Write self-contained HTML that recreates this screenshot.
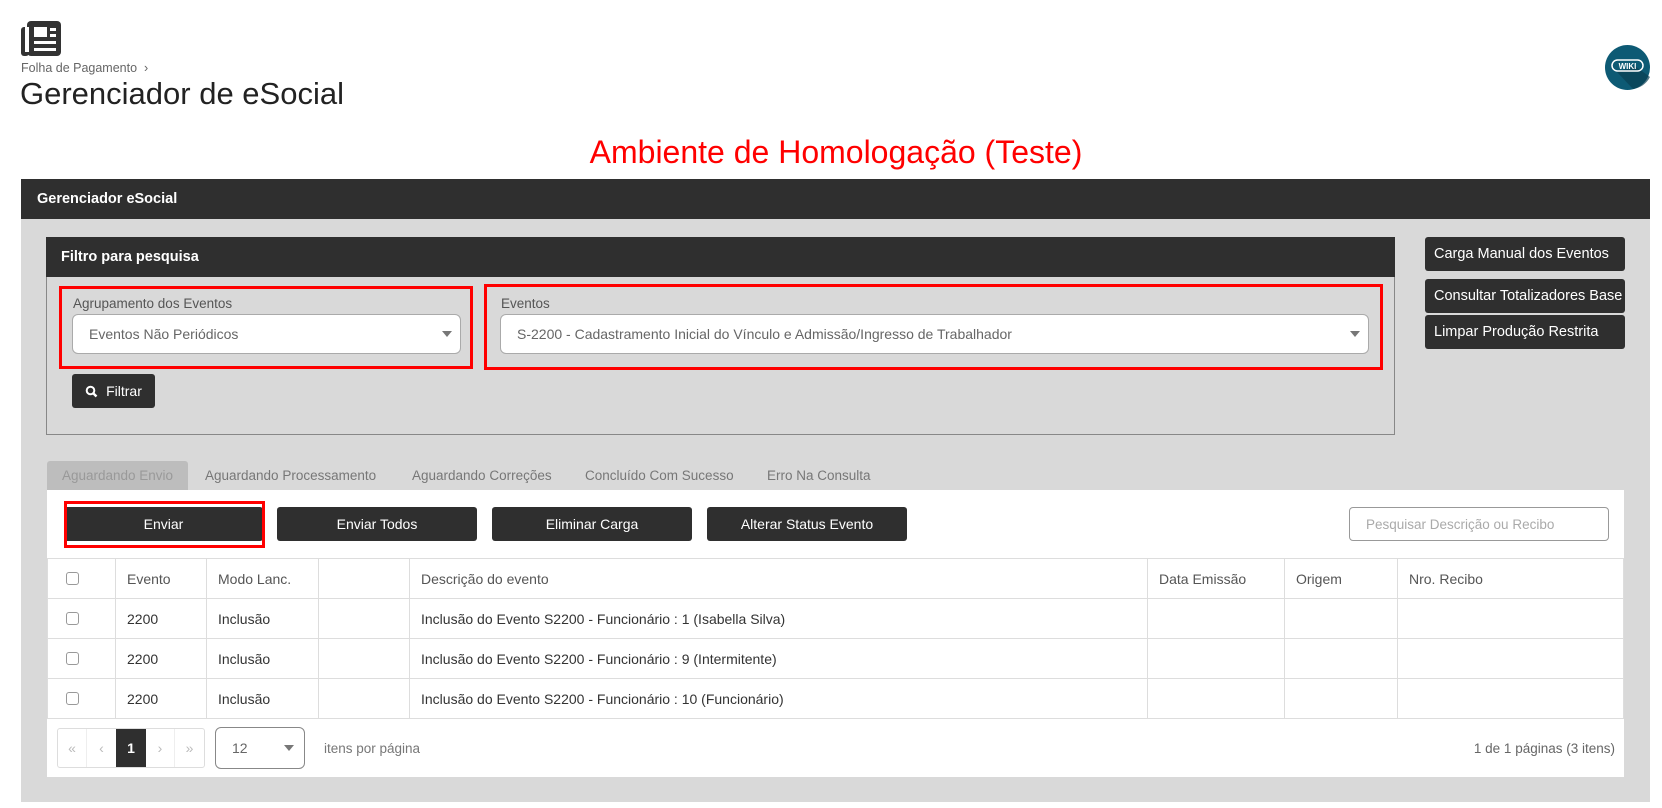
<!DOCTYPE html>
<html><head><meta charset="utf-8"><style>
*{box-sizing:border-box;margin:0;padding:0}
body{width:1662px;height:808px;background:#fff;font-family:"Liberation Sans",sans-serif;position:relative;overflow:hidden;color:#333}
.a{position:absolute}
.btn{position:absolute;background:#2f2f2f;color:#fff;border-radius:3px;font-size:14px;display:flex;align-items:center;justify-content:center}
.rb{position:absolute;background:#2f2f2f;color:#fff;border-radius:3px;font-size:14.5px;padding-left:9px;display:flex;align-items:center;white-space:nowrap;overflow:hidden}
.sel{position:absolute;background:#fff;border:1px solid #aaa;border-radius:6px;font-size:14px;color:#666;padding-left:16px;display:flex;align-items:center}
.tri{position:absolute;right:8px;top:50%;margin-top:-3px;width:0;height:0;border-left:5px solid transparent;border-right:5px solid transparent;border-top:6px solid #777}
.red{position:absolute;border:3px solid #f00}
.lbl{position:absolute;font-size:13.5px;color:#555}
.tab{position:absolute;top:461px;height:29px;font-size:13.5px;color:#777;display:flex;align-items:center}
table{position:absolute;left:47px;top:558px;width:1577px;border-collapse:collapse;font-size:14px}
td{border:1px solid #ddd;height:40px;padding-left:11px;color:#333}
tr.h td{height:40px;color:#555}
.cb{width:13px;height:13px;border:1px solid #999;border-radius:3px;margin-left:7px}
</style></head><body>
<svg class="a" style="left:21px;top:21px" width="40" height="35" viewBox="0 0 40 35"><rect x="0" y="6" width="8" height="29" rx="3" fill="#333"/><rect x="6" y="0" width="34" height="35" rx="4" fill="#333"/><rect x="4" y="6" width="4" height="25" fill="#fff"/><rect x="13" y="6" width="13" height="10" fill="#fff"/><rect x="29" y="7" width="6" height="3" fill="#fff"/><rect x="29" y="13" width="6" height="3" fill="#fff"/><rect x="13" y="20" width="22" height="3" fill="#fff"/><rect x="13" y="27" width="22" height="3" fill="#fff"/></svg>
<div class="a" style="left:21px;top:61px;font-size:12.5px;color:#666">Folha de Pagamento &nbsp;›</div>
<div class="a" style="left:20px;top:76px;font-size:31px;color:#222">Gerenciador de eSocial</div>
<svg class="a" style="left:1605px;top:45px" width="45" height="45" viewBox="0 0 45 45"><circle cx="22.5" cy="22.5" r="22.5" fill="#0d5a74"/><path d="M30 21 L45 32 A22.5 22.5 0 0 1 28 44 L12 27 Z" fill="#0a3f52" opacity=".7"/><rect x="7" y="15" width="31" height="11" rx="5.5" fill="none" stroke="#fff" stroke-width="1.5"/><text x="22.5" y="24" font-size="8" font-weight="bold" fill="#fff" text-anchor="middle" font-family="Liberation Sans">WIKI</text></svg>
<div class="a" style="left:0;width:1672px;text-align:center;top:134px;font-size:32px;color:#f00">Ambiente de Homologação (Teste)</div>
<div class="a" style="left:21px;top:179px;width:1629px;height:40px;background:#2f2f2f;color:#fff;font-weight:bold;font-size:14.5px;padding:12px 0 0 16px">Gerenciador eSocial</div>
<div class="a" style="left:21px;top:219px;width:1629px;height:583px;background:#d9d9d9"></div>
<div class="a" style="left:46px;top:237px;width:1349px;height:198px;border:1px solid #888;border-top:none"></div>
<div class="a" style="left:46px;top:237px;width:1349px;height:40px;background:#2f2f2f;color:#fff;font-weight:bold;font-size:14.5px;padding:12px 0 0 15px">Filtro para pesquisa</div>
<div class="red" style="left:59px;top:286px;width:414px;height:83px"></div>
<div class="lbl" style="left:73px;top:296px">Agrupamento dos Eventos</div>
<div class="sel" style="left:72px;top:314px;width:389px;height:40px">Eventos Não Periódicos<span class="tri"></span></div>
<div class="red" style="left:484px;top:284px;width:899px;height:86px"></div>
<div class="lbl" style="left:501px;top:296px">Eventos</div>
<div class="sel" style="left:500px;top:314px;width:869px;height:40px">S-2200 - Cadastramento Inicial do Vínculo e Admissão/Ingresso de Trabalhador<span class="tri"></span></div>
<div class="btn" style="left:72px;top:374px;width:83px;height:34px"><svg width="13" height="13" viewBox="0 0 13 13" style="margin-right:8px"><circle cx="5.5" cy="5.5" r="3.8" fill="none" stroke="#fff" stroke-width="2"/><path d="M8 8 L11.5 11.5" stroke="#fff" stroke-width="2.4"/></svg>Filtrar</div>
<div class="rb" style="left:1425px;top:237px;width:200px;height:34px">Carga Manual dos Eventos</div>
<div class="rb" style="left:1425px;top:279px;width:200px;height:34px">Consultar Totalizadores Base</div>
<div class="rb" style="left:1425px;top:315px;width:200px;height:34px">Limpar Produção Restrita</div>
<div class="tab" style="left:47px;width:141px;background:#bdbdbd;color:#999;justify-content:center;border-radius:3px 3px 0 0">Aguardando Envio</div>
<div class="tab" style="left:205px">Aguardando Processamento</div>
<div class="tab" style="left:412px">Aguardando Correções</div>
<div class="tab" style="left:585px">Concluído Com Sucesso</div>
<div class="tab" style="left:767px">Erro Na Consulta</div>
<div class="a" style="left:47px;top:490px;width:1577px;height:287px;background:#fff"></div>
<div class="btn" style="left:64px;top:507px;width:199px;height:34px">Enviar</div>
<div class="red" style="left:64px;top:501px;width:201px;height:47px"></div>
<div class="btn" style="left:277px;top:507px;width:200px;height:34px">Enviar Todos</div>
<div class="btn" style="left:492px;top:507px;width:200px;height:34px">Eliminar Carga</div>
<div class="btn" style="left:707px;top:507px;width:200px;height:34px">Alterar Status Evento</div>
<div class="a" style="left:1349px;top:507px;width:260px;height:34px;border:1px solid #999;border-radius:4px;font-size:13.5px;color:#aaa;padding:9px 0 0 16px">Pesquisar Descrição ou Recibo</div>
<table>
<colgroup><col style="width:68px"><col style="width:91px"><col style="width:112px"><col style="width:91px"><col style="width:738px"><col style="width:137px"><col style="width:113px"><col></colgroup>
<tr class="h"><td><div class="cb"></div></td><td>Evento</td><td>Modo Lanc.</td><td></td><td>Descrição do evento</td><td>Data Emissão</td><td>Origem</td><td>Nro. Recibo</td></tr>
<tr><td><div class="cb"></div></td><td>2200</td><td>Inclusão</td><td></td><td>Inclusão do Evento S2200 - Funcionário : 1 (Isabella Silva)</td><td></td><td></td><td></td></tr>
<tr><td><div class="cb"></div></td><td>2200</td><td>Inclusão</td><td></td><td>Inclusão do Evento S2200 - Funcionário : 9 (Intermitente)</td><td></td><td></td><td></td></tr>
<tr><td><div class="cb"></div></td><td>2200</td><td>Inclusão</td><td></td><td>Inclusão do Evento S2200 - Funcionário : 10 (Funcionário)</td><td></td><td></td><td></td></tr>
</table>
<div class="a" style="left:57px;top:728px;width:148px;height:40px;border:1px solid #ddd;border-radius:3px;display:flex;font-size:14px;color:#bbb">
<div style="width:29px;display:flex;align-items:center;justify-content:center;border-right:1px solid #eee">«</div>
<div style="width:29px;display:flex;align-items:center;justify-content:center">‹</div>
<div style="width:30px;background:#2f2f2f;color:#fff;font-weight:bold;display:flex;align-items:center;justify-content:center">1</div>
<div style="width:29px;display:flex;align-items:center;justify-content:center;border-right:1px solid #eee">›</div>
<div style="width:29px;display:flex;align-items:center;justify-content:center">»</div></div>
<div class="sel" style="left:215px;top:727px;width:90px;height:42px;border-color:#888">12<span class="tri" style="right:10px"></span></div>
<div class="a" style="left:324px;top:741px;font-size:13.5px;color:#777">itens por página</div>
<div class="a" style="right:47px;top:741px;font-size:13.5px;color:#666">1 de 1 páginas (3 itens)</div>
</body></html>
